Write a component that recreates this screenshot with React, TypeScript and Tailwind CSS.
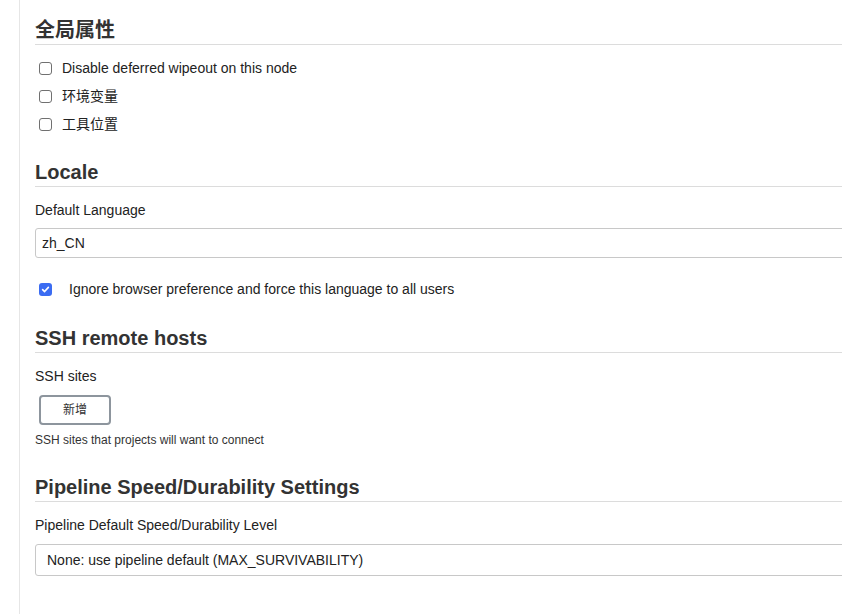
import React from 'react';

const font = { fontFamily: '"Liberation Sans", Arial, "Noto Sans CJK SC", sans-serif' };

const SectionHeading: React.FC<{ title: string; className?: string }> = ({ title, className }) => (
  <h2
    className={`text-[20px] leading-6 font-bold text-[#333] pb-0.5 border-b border-[#dcdcdc] ${className ?? ''}`}
  >
    {title}
  </h2>
);

const Checkbox: React.FC<{ checked?: boolean }> = ({ checked }) =>
  checked ? (
    <span className="w-[13px] h-[13px] rounded-[3px] bg-[#3b6cf2] flex items-center justify-center shrink-0">
      <svg width="9" height="9" viewBox="0 0 10 10" fill="none">
        <path d="M1.8 5.2 L4 7.3 L8.2 2.6" stroke="#fff" strokeWidth="1.8" strokeLinecap="round" strokeLinejoin="round" />
      </svg>
    </span>
  ) : (
    <span className="w-[13px] h-[13px] rounded-[3px] border border-[#707070] bg-white shrink-0" />
  );

const CheckRow: React.FC<{ label: string; checked?: boolean; gap?: string }> = ({ label, checked, gap }) => (
  <label className="h-7 flex items-center pl-1">
    <Checkbox checked={checked} />
    <span className={`${gap ?? 'ml-[10px]'} text-sm text-[#222]`}>{label}</span>
  </label>
);

const FieldLabel: React.FC<{ text: string; className?: string }> = ({ text, className }) => (
  <div className={`text-sm leading-5 font-medium text-[#222] ${className ?? ''}`}>{text}</div>
);

const App: React.FC = () => {
  return (
    <div className="min-h-[614px] bg-white flex overflow-hidden" style={font}>
      <div className="w-5 shrink-0 border-r border-[#e6e6e6]" />
      <div className="flex-1 pl-[15px] pt-[18px] -mr-3">
        <SectionHeading title="全局属性" />
        <div className="mt-[9px]">
          <CheckRow label="Disable deferred wipeout on this node" />
          <CheckRow label="环境变量" />
          <CheckRow label="工具位置" />
        </div>

        <SectionHeading title="Locale" className="mt-[22px]" />
        <FieldLabel text="Default Language" className="mt-[13px]" />
        <div className="mt-[8px] h-[30px] border border-[#c8c8c8] rounded-[3px] flex items-center pl-[6px] text-sm text-[#222]">
          zh_CN
        </div>
        <div className="mt-[17px]">
          <CheckRow label="Ignore browser preference and force this language to all users" checked gap="ml-[17px]" />
        </div>

        <SectionHeading title="SSH remote hosts" className="mt-[23px]" />
        <FieldLabel text="SSH sites" className="mt-[13px]" />
        <button className="mt-[9px] ml-1 w-[72px] h-[30px] border-2 border-[#8d959d] rounded-[4px] bg-white text-xs text-[#333] flex items-center justify-center">
          新增
        </button>
        <div className="mt-[7px] text-xs leading-4 text-[#333]">SSH sites that projects will want to connect</div>

        <SectionHeading title="Pipeline Speed/Durability Settings" className="mt-[27px]" />
        <FieldLabel text="Pipeline Default Speed/Durability Level" className="mt-[13px]" />
        <div className="mt-[9px] h-[32px] border border-[#c8c8c8] rounded-[3px] flex items-center pl-[11px] text-sm text-[#222]">
          None: use pipeline default (MAX_SURVIVABILITY)
        </div>
      </div>
    </div>
  );
};

export default App;
